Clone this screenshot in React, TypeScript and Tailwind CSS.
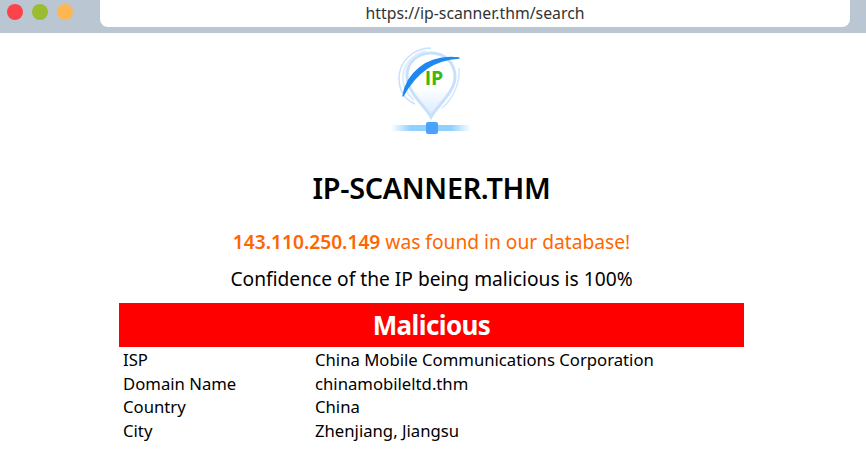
const rows = [
  ['ISP', 'China Mobile Communications Corporation'],
  ['Domain Name', 'chinamobileltd.thm'],
  ['Country', 'China'],
  ['City', 'Zhenjiang, Jiangsu'],
];

const Logo = () => (
  <svg width="100" height="100" viewBox="0 0 100 100" className="block -translate-x-px">
    <defs>
      <linearGradient id="pin" x1="0" y1="0" x2="0" y2="1">
        <stop offset="0" stopColor="#ffffff" />
        <stop offset="0.55" stopColor="#ffffff" />
        <stop offset="1" stopColor="#d6e9fd" />
      </linearGradient>
      <linearGradient id="bar" x1="0" y1="0" x2="1" y2="0">
        <stop offset="0" stopColor="#8fd0ff" stopOpacity="0" />
        <stop offset="0.25" stopColor="#8fd0ff" />
        <stop offset="0.75" stopColor="#8fd0ff" />
        <stop offset="1" stopColor="#8fd0ff" stopOpacity="0" />
      </linearGradient>
    </defs>
    <path d="M50 77 C44 66 26 52 26 36 C26 22 37 13 50 13 C64 13 74 23 74 37 C74 52 56 66 50 77 Z" fill="url(#pin)" stroke="#c8e1fb" strokeWidth="3" />
    <path d="M50 8 C32 8 18 22 18 38 C18 52 25 60 34 64" fill="none" stroke="#c8e2fc" strokeWidth="1.5" />
    <path d="M45 11 C32 14 22 25 22 38 C22 48 27 55 33 60" fill="none" stroke="#dcedfd" strokeWidth="2" />
    <path d="M78 28 C79 42 73 58 61 68" fill="none" stroke="#d3e7fc" strokeWidth="1.5" />
    <path d="M22 56 C25 36 44 14 78 18 C54 19 35 32 22 56 Z" fill="#1e88f0" stroke="#1e88f0" strokeWidth="1.4" strokeLinejoin="round" />
    <text x="53" y="45" textAnchor="middle" fontSize="19.5" fontWeight="700" fill="#3cb80e" style={{ fontFamily: '"Open Sans", sans-serif' }}>IP</text>
    <rect x="10" y="85" width="80" height="6" fill="url(#bar)" />
    <rect x="45" y="82" width="12" height="12" rx="2" fill="#4aa3fa" />
  </svg>
);

export default function App() {
  return (
    <div className="min-h-[459px] bg-white text-black font-['Noto_Sans',sans-serif]">
      <div className="h-[33px] bg-[#bac7d2] flex items-start">
        <div className="flex gap-[9px] pl-[7px] pt-1 w-[100px]">
          <span className="w-4 h-4 rounded-full bg-[#fc4349]" />
          <span className="w-4 h-4 rounded-full bg-[#9bbb30]" />
          <span className="w-4 h-4 rounded-full bg-[#fdb652]" />
        </div>
        <div className="w-[750px] h-[27px] bg-white rounded-b-lg flex items-center justify-center text-[15.8px] text-[#333]">
          https://ip-scanner.thm/search
        </div>
      </div>
      <main className="w-[625px] ml-[119px] flex flex-col items-center">
        <div className="mt-[7px]">
          <Logo />
        </div>
        <h1 className="mt-[30px] text-[28.8px] leading-[36px] font-semibold tracking-[-0.3px]">IP-SCANNER.THM</h1>
        <p className="mt-[23px] text-[19.2px] leading-[26px] text-[#ff6600]">
          <b className="font-semibold">143.110.250.149</b> was found in our database!
        </p>
        <p className="mt-[11px] text-[19.2px] leading-[26px]">Confidence of the IP being malicious is 100%</p>
        <div className="mt-[11px] w-full h-[44px] bg-[#ff0000] text-white flex items-center justify-center text-[26px] font-bold tracking-[-0.6px]">
          Malicious
        </div>
        <div className="w-full mt-px">
          {rows.map(([label, value]) => (
            <div key={label} className="flex h-[23.6px] items-center pl-1 text-[16.7px]">
              <span className="w-[192px]">{label}</span>
              <span>{value}</span>
            </div>
          ))}
        </div>
      </main>
    </div>
  );
}
